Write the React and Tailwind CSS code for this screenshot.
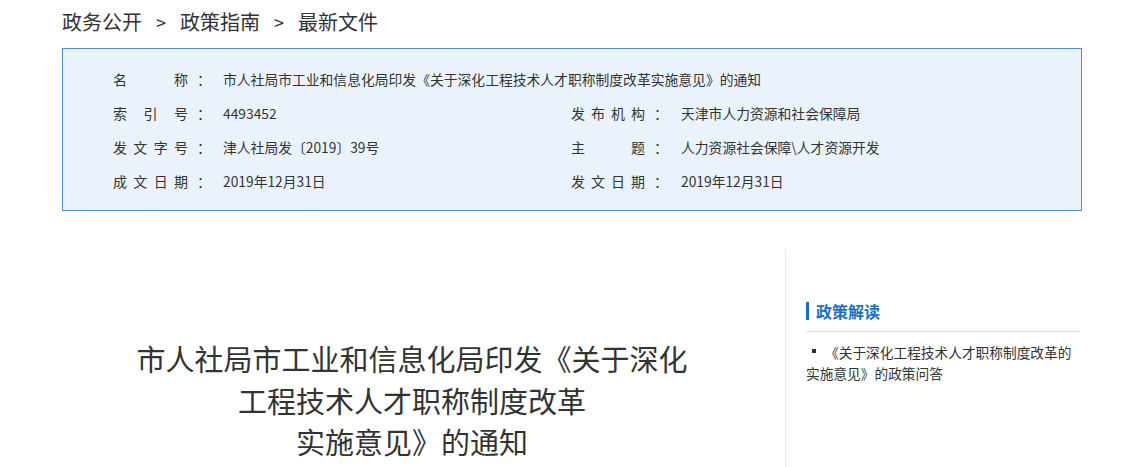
import React from "react";

const font = { fontFamily: '"Microsoft YaHei", "Noto Sans CJK SC", "Noto Sans", sans-serif' };

function Label({ chars, w = "w-[75px]" }) {
  return (
    <div className="flex items-center shrink-0 text-[14px]">
      <div className={`flex justify-between ${w}`}>
        {chars.map((c, i) => (
          <span key={i}>{c}</span>
        ))}
      </div>
      <span className="ml-[9px]">：</span>
    </div>
  );
}

function Row({ chars, value, labelW, gap }) {
  return (
    <div className="flex items-center h-[34px]">
      <Label chars={chars} w={labelW} />
      <span className={`${gap} text-[13.8px]`}>{value}</span>
    </div>
  );
}

export default function App() {
  return (
    <div className="bg-white w-[1131px] h-[467px] overflow-hidden text-[#333]" style={font}>
      <div className="ml-[62px] w-[1020px]">
        <div className="h-[48px] flex items-center text-[20px] text-[#333] pb-[4px]">
          <span>政务公开</span>
          <span className="mx-[14px] text-[18px]">&gt;</span>
          <span>政策指南</span>
          <span className="mx-[14px] text-[18px]">&gt;</span>
          <span>最新文件</span>
        </div>
        <div className="border border-[#4a90e2] bg-[#eaf3fc] pt-[13px] pb-[12px] pl-[50px] text-[#333]">
          <Row chars={["名", "称"]} value="市人社局市工业和信息化局印发《关于深化工程技术人才职称制度改革实施意见》的通知" gap="ml-[12px]" />
          <div className="flex">
            <div className="w-[458px]">
              <Row chars={["索", "引", "号"]} value="4493452" gap="ml-[12px]" />
              <Row chars={["发", "文", "字", "号"]} value="津人社局发〔2019〕39号" gap="ml-[12px]" />
              <Row chars={["成", "文", "日", "期"]} value="2019年12月31日" gap="ml-[12px]" />
            </div>
            <div>
              <Row chars={["发", "布", "机", "构"]} value="天津市人力资源和社会保障局" labelW="w-[74px]" gap="ml-[13px]" />
              <Row chars={["主", "题"]} value="人力资源社会保障\人才资源开发" labelW="w-[74px]" gap="ml-[13px]" />
              <Row chars={["发", "文", "日", "期"]} value="2019年12月31日" labelW="w-[74px]" gap="ml-[13px]" />
            </div>
          </div>
        </div>
        <div className="flex mt-[39px]">
          <div className="w-[700px] pt-[88px] text-center text-[29px] leading-[41.5px] text-[#333]">
            市人社局市工业和信息化局印发《关于深化
            <br />
            工程技术人才职称制度改革
            <br />
            实施意见》的通知
          </div>
          <div className="ml-[23px] w-[1px] h-[230px] bg-[#e8e8e8]"></div>
          <div className="pl-[20px] w-[296px] pt-[50px]">
            <div className="flex items-center h-[22px] text-[16px] font-bold text-[#1a6fc8]">
              <span className="w-[3px] h-[18px] bg-[#1a6fc8] mr-[7px]"></span>
              <span>政策解读</span>
            </div>
            <div className="w-[274px] h-[1px] bg-[#dddddd] mt-[9px]"></div>
            <div className="mt-[10px] w-[274px] text-[13.7px] leading-[21px] text-[#333]">
              <span className="inline-block w-[4px] h-[4px] bg-[#333] ml-[6px] mr-[9px] align-[5px]"></span>
              《关于深化工程技术人才职称制度改革的实施意见》的政策问答
            </div>
          </div>
        </div>
      </div>
    </div>
  );
}
